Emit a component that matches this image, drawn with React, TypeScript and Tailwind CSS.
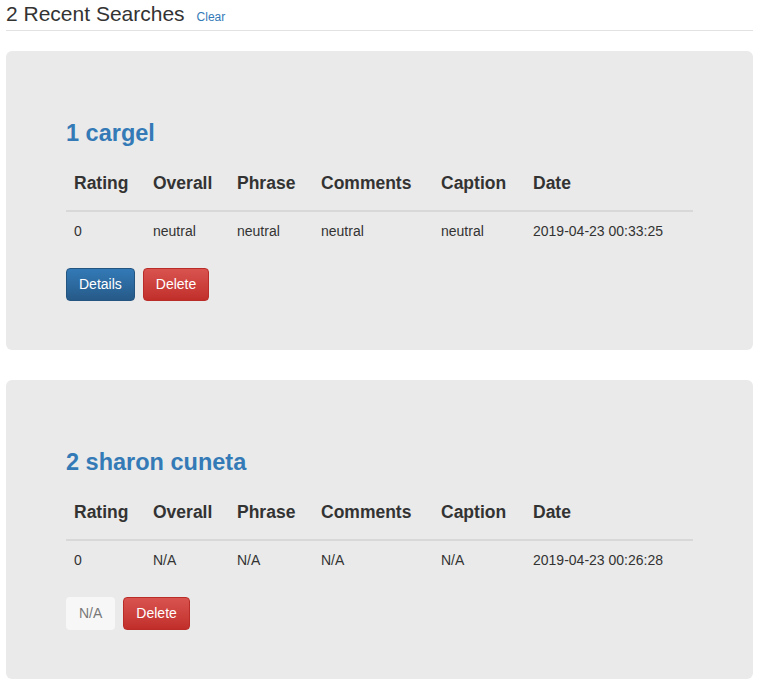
const searches = [
  {
    id: 1,
    term: 'cargel',
    rating: '0',
    overall: 'neutral',
    phrase: 'neutral',
    comments: 'neutral',
    caption: 'neutral',
    date: '2019-04-23 00:33:25',
    hasDetails: true,
  },
  {
    id: 2,
    term: 'sharon cuneta',
    rating: '0',
    overall: 'N/A',
    phrase: 'N/A',
    comments: 'N/A',
    caption: 'N/A',
    date: '2019-04-23 00:26:28',
    hasDetails: false,
  },
];

const cols = ['Rating', 'Overall', 'Phrase', 'Comments', 'Caption', 'Date'];
const widths = ['w-[79px]', 'w-[84px]', 'w-[84px]', 'w-[120px]', 'w-[92px]', ''];

function SearchCard({ s }: { s: (typeof searches)[number] }) {
  const cells = [s.rating, s.overall, s.phrase, s.comments, s.caption, s.date];
  return (
    <div className="bg-[#eaeaea] rounded-[6px] px-[60px] pt-[69px] pb-[49px]">
      <h2 className="text-[23.5px] leading-[26px] font-bold text-[#337ab7]">
        {s.id} {s.term}
      </h2>
      <table className="w-full table-fixed mt-[16px] mb-[20px] border-collapse">
        <thead>
          <tr className="border-b-2 border-[#d8d8d8]">
            {cols.map((c, i) => (
              <th
                key={c}
                className={`${widths[i]} text-left text-[17.5px] leading-[26px] font-bold text-[#333] pl-[8px] pt-[8px] pb-[14px]`}
              >
                {c}
              </th>
            ))}
          </tr>
        </thead>
        <tbody>
          <tr>
            {cells.map((v, i) => (
              <td key={i} className="text-[14px] leading-[20px] text-[#333] pl-[8px] pt-[9px] pb-[7px] whitespace-nowrap">
                {v}
              </td>
            ))}
          </tr>
        </tbody>
      </table>
      <div className="flex gap-[8px]">
        {s.hasDetails ? (
          <button className="h-[33px] px-[12px] rounded-[4px] border border-[#245580] bg-gradient-to-b from-[#337ab7] to-[#265a88] text-white text-[14px]">
            Details
          </button>
        ) : (
          <button className="h-[33px] px-[13px] rounded-[4px] bg-[#f7f7f7] text-[#777] text-[14px]">
            N/A
          </button>
        )}
        <button className="h-[33px] px-[12px] rounded-[4px] border border-[#b92c28] bg-gradient-to-b from-[#d9534f] to-[#c12e2a] text-white text-[14px]">
          Delete
        </button>
      </div>
    </div>
  );
}

export default function App() {
  return (
    <div className="min-h-screen bg-white px-[6px] font-['Liberation_Sans',Arial,sans-serif]">
      <div className="flex items-baseline gap-[12px] pt-[3px] pb-[4px] border-b border-[#e2e2e2]">
        <h1 className="text-[21px] leading-[22px] text-[#333]">2 Recent Searches</h1>
        <a className="text-[12px] text-[#337ab7]">Clear</a>
      </div>
      <div className="flex flex-col gap-[30px] mt-[20px]">
        {searches.map((s) => (
          <SearchCard key={s.id} s={s} />
        ))}
      </div>
    </div>
  );
}
